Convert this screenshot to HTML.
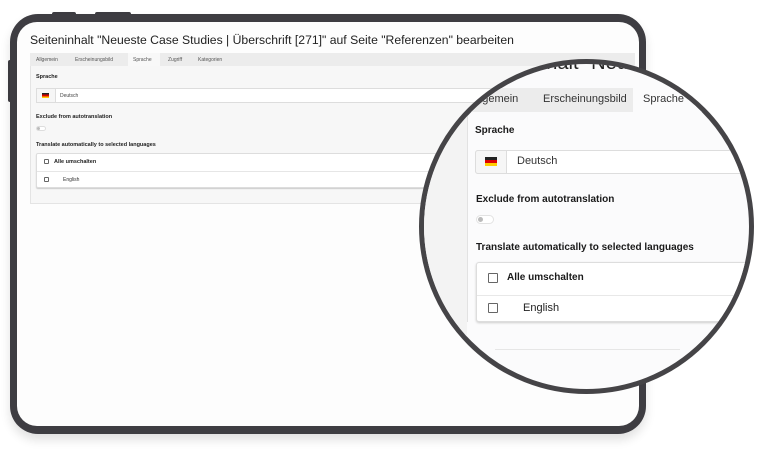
<!DOCTYPE html>
<html><head><meta charset="utf-8"><style>
*{margin:0;padding:0;box-sizing:border-box}
body{width:760px;height:450px;background:#fff;position:relative;overflow:hidden;font-family:"Liberation Sans",sans-serif;color:#222}
.a{position:absolute}
.tab{position:absolute;font-size:5px;color:#555;top:57px}
.s{font-size:5.5px;font-weight:bold;position:absolute;color:#222}
.cb{position:absolute;border:0.8px solid #666;border-radius:1px;background:#fff}
.m .lbl{position:absolute;font-size:10px;font-weight:bold;color:#1a1a1a;white-space:nowrap}
</style></head><body>
<div class="a" style="left:52px;top:12px;width:24px;height:4px;background:#3e3d42;border-radius:2px"></div>
<div class="a" style="left:95px;top:12px;width:36px;height:4px;background:#3e3d42;border-radius:2px"></div>
<div class="a" style="left:8px;top:60px;width:4px;height:42px;background:#3e3d42;border-radius:2px"></div>
<div class="a" style="left:10px;top:14px;width:636px;height:420px;background:#3e3d42;border-radius:28px;box-shadow:0 6px 10px rgba(0,0,0,0.12)"></div>
<div class="a" style="left:17px;top:22px;width:622px;height:404px;background:#fdfdfd;border-radius:20px"></div>

<div class="a" style="left:30px;top:33px;font-size:12.2px;color:#222;white-space:nowrap">Seiteninhalt "Neueste Case Studies | Überschrift [271]" auf Seite "Referenzen" bearbeiten</div>
<div class="a" style="left:30px;top:53px;width:605px;height:13px;background:#ececec"></div>
<div class="a" style="left:128px;top:53px;width:32px;height:13px;background:#f8f8f8"></div>
<div class="tab" style="left:36px">Allgemein</div>
<div class="tab" style="left:75px">Erscheinungsbild</div>
<div class="tab" style="left:133px">Sprache</div>
<div class="tab" style="left:168px">Zugriff</div>
<div class="tab" style="left:198px">Kategorien</div>
<div class="a" style="left:30px;top:66px;width:605px;height:138px;background:#f7f7f7;border:1px solid #e4e4e4;border-top:none"></div>
<div class="s" style="left:36px;top:74px">Sprache</div>
<div class="a" style="left:36px;top:88px;width:594px;height:15px;background:#fff;border:1px solid #ddd;border-radius:2px"></div>
<div class="a" style="left:36px;top:88px;width:20px;height:15px;background:#f6f6f6;border:1px solid #ddd"></div>
<div class="a" style="left:42px;top:93px;width:7px;height:5px;background:linear-gradient(#222 33%,#d00 33% 66%,#fc0 66%)"></div>
<div class="a" style="left:60px;top:93px;font-size:5px;color:#444">Deutsch</div>
<div class="s" style="left:36px;top:114px">Exclude from autotranslation</div>
<div class="a" style="left:36px;top:126px;width:10px;height:5px;border:0.6px solid #ddd;border-radius:3px;background:#fff"></div>
<div class="a" style="left:37px;top:127px;width:3px;height:3px;border-radius:50%;background:#bbb"></div>
<div class="s" style="left:36px;top:142px">Translate automatically to selected languages</div>
<div class="a" style="left:36px;top:153px;width:594px;height:35px;background:#fff;border:1px solid #ddd;border-radius:2px;box-shadow:0 1px 1px #ccc"></div>
<div class="a" style="left:37px;top:171px;width:592px;height:1px;background:#e6e6e6"></div>
<div class="cb" style="left:44px;top:159px;width:5px;height:5px"></div>
<div class="s" style="left:54px;top:159px">Alle umschalten</div>
<div class="cb" style="left:44px;top:177px;width:5px;height:5px"></div>
<div class="a" style="left:63px;top:177px;font-size:5px;color:#333">English</div>

<div class="a m" style="left:419px;top:59px;width:335px;height:335px;border-radius:50%;border:5px solid #454447;overflow:hidden;background:#fbfbfc">
 <div class="a" style="left:-424px;top:-64px;width:760px;height:450px">
  <div class="a" style="left:0;top:0;width:467px;height:450px;background:#f3f3f3"></div>
  <div class="a" style="left:474px;top:52px;font-size:20px;color:#222;white-space:nowrap">Seiteninhalt "Neueste</div>
  <div class="a" style="left:420px;top:88px;width:340px;height:24px;background:#ececec"></div>
  <div class="a" style="left:633px;top:88px;width:80px;height:24px;background:#fbfbfc"></div>
  <div class="a" style="left:470px;top:93px;font-size:11px;color:#333">Allgemein</div>
  <div class="a" style="left:543px;top:93px;font-size:11px;color:#333">Erscheinungsbild</div>
  <div class="a" style="left:643px;top:93px;font-size:11px;color:#333">Sprache</div>
  <div class="a" style="left:467px;top:112px;width:1px;height:210px;background:#e2e2e2"></div>
  <div class="lbl" style="left:475px;top:125px">Sprache</div>
  <div class="a" style="left:475px;top:150px;width:300px;height:24px;background:#fff;border:1px solid #ddd;border-radius:3px"></div>
  <div class="a" style="left:475px;top:150px;width:32px;height:24px;background:#f6f6f6;border:1px solid #ddd;border-radius:3px 0 0 3px"></div>
  <div class="a" style="left:485px;top:157px;width:12px;height:9px;background:linear-gradient(#222 33%,#d00 33% 66%,#fc0 66%)"></div>
  <div class="a" style="left:517px;top:155px;font-size:11px;color:#333">Deutsch</div>
  <div class="lbl" style="left:476px;top:194px">Exclude from autotranslation</div>
  <div class="a" style="left:476px;top:215px;width:18px;height:9px;border:1px solid #e2e2e2;border-radius:5px;background:#fff"></div>
  <div class="a" style="left:478px;top:217px;width:5px;height:5px;border-radius:50%;background:#bbb"></div>
  <div class="lbl" style="left:476px;top:242px">Translate automatically to selected languages</div>
  <div class="a" style="left:476px;top:262px;width:300px;height:60px;background:#fff;border:1px solid #ddd;border-radius:3px;box-shadow:0 1px 2px #ccc"></div>
  <div class="a" style="left:477px;top:295px;width:298px;height:1px;background:#e8e8e8"></div>
  <div class="cb" style="left:488px;top:273px;width:10px;height:10px;border-width:1px"></div>
  <div class="lbl" style="left:507px;top:272px">Alle umschalten</div>
  <div class="cb" style="left:488px;top:303px;width:10px;height:10px;border-width:1px"></div>
  <div class="a" style="left:523px;top:302px;font-size:11px;color:#222">English</div>
  <div class="a" style="left:495px;top:349px;width:185px;height:1px;background:#e6e6e6"></div>
 </div>
</div>
</body></html>
